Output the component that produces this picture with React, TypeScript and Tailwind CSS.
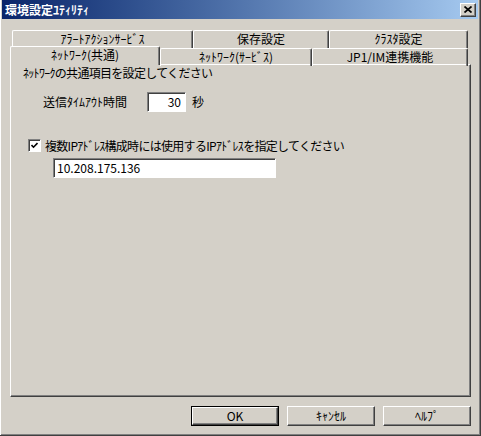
import React from "react"

const raised =
  "border border-t-white border-l-white border-r-[#404040] border-b-[#404040] shadow-[inset_-1px_-1px_0_#808080]"
const sunken =
  "border border-t-[#808080] border-l-[#808080] border-r-white border-b-white shadow-[inset_1px_1px_0_#404040] bg-white"

function Tab({ label, w, selected }: { label: string; w: string; selected?: boolean }) {
  if (selected) {
    return (
      <div
        className={`${w} relative z-10 -mt-[2px] h-[19px] rounded-tl-[2px] rounded-tr-[2px] border-l border-t border-r border-t-white border-l-white border-r-[#404040] bg-[#d4d0c8] shadow-[inset_-1px_0_0_#808080] flex justify-center pt-[1px]`}
      >
        {label}
      </div>
    )
  }
  return (
    <div
      className={`${w} h-[18px] rounded-tl-[2px] rounded-tr-[2px] border-l border-t border-r border-t-white border-l-white border-r-[#404040] shadow-[inset_-1px_0_0_#808080] flex justify-center pt-[1px]`}
    >
      {label}
    </div>
  )
}

function Button({ label, isDefault }: { label: string; isDefault?: boolean }) {
  if (isDefault) {
    return (
      <div className="w-[88px] h-[20px] border border-black">
        <div className={`${raised} h-full flex items-center justify-center`}>{label}</div>
      </div>
    )
  }
  return <div className={`${raised} w-[88px] h-[20px] flex items-center justify-center`}>{label}</div>
}

export default function App() {
  return (
    <div className="w-[481px] h-[436px] bg-[#d4d0c8] border-r border-b border-r-[#404040] border-b-[#404040] shadow-[inset_1px_0_0_#fff,inset_-1px_-1px_0_#808080] pl-[2px] pr-[2px] flex flex-col text-[12px] leading-[14px] text-black font-['Noto_Sans_CJK_JP','Liberation_Sans',sans-serif]">
      {/* title bar */}
      <div className="h-[19px] flex items-center justify-between bg-gradient-to-r from-[#0a246a] to-[#a6caf0] pl-[3px] pr-[2px]">
        <span className="text-white font-bold text-[12px] leading-[14px]">環境設定ﾕﾃｨﾘﾃｨ</span>
        <div className={`${raised} w-[16px] h-[14px] bg-[#d4d0c8] flex items-center justify-center`}>
          <svg width="8" height="7" viewBox="0 0 8 7">
            <path d="M0.5 0.5 L7.5 6.5 M7.5 0.5 L0.5 6.5" stroke="black" strokeWidth="1.7" />
          </svg>
        </div>
      </div>

      {/* tabs */}
      <div className="ml-[8px] mt-[11px] w-[461px]">
        <div className="flex pl-[2px]">
          <Tab label="ｱﾗｰﾄｱｸｼｮﾝｻｰﾋﾞｽ" w="w-[181px]" />
          <Tab label="保存設定" w="w-[136px]" />
          <Tab label="ｸﾗｽﾀ設定" w="w-[139px]" />
        </div>
        <div className="flex h-[16px]">
          <Tab label="ﾈｯﾄﾜｰｸ(共通)" w="w-[150px]" selected />
          <Tab label="ﾈｯﾄﾜｰｸ(ｻｰﾋﾞｽ)" w="w-[152px]" />
          <Tab label="JP1/IM連携機能" w="w-[156px]" />
        </div>

        {/* panel */}
        <div className={`${raised} h-[333px] flex flex-col`}>
          <div className="ml-[12px] mt-[1px] tracking-[-0.7px]">ﾈｯﾄﾜｰｸの共通項目を設定してください</div>

          <div className="flex items-center mt-[12px] ml-[32px] h-[20px]">
            <span className="w-[104px]">送信ﾀｲﾑｱｳﾄ時間</span>
            <div className={`${sunken} w-[39px] h-[20px] flex items-center justify-end pr-[4px]`}>30</div>
            <span className="ml-[6px]">秒</span>
          </div>

          <div className="flex items-center mt-[27px] ml-[17px] h-[13px]">
            <div className={`${sunken} w-[13px] h-[13px] flex items-center justify-center`}>
              <svg width="7" height="7" viewBox="0 0 7 7">
                <path d="M0.5 3 L2.5 5.2 L6.5 1" stroke="black" strokeWidth="1.6" fill="none" />
              </svg>
            </div>
            <span className="ml-[4px] tracking-[-0.7px]">複数IPｱﾄﾞﾚｽ構成時には使用するIPｱﾄﾞﾚｽを指定してください</span>
          </div>

          <div className={`${sunken} mt-[6px] ml-[42px] w-[223px] h-[20px] flex items-center pl-[3px]`}>
            10.208.175.136
          </div>
        </div>
      </div>

      {/* buttons */}
      <div className="flex justify-end gap-[8px] mt-[9px] mr-[7px]">
        <Button label="OK" isDefault />
        <Button label="ｷｬﾝｾﾙ" />
        <Button label="ﾍﾙﾌﾟ" />
      </div>
    </div>
  )
}
